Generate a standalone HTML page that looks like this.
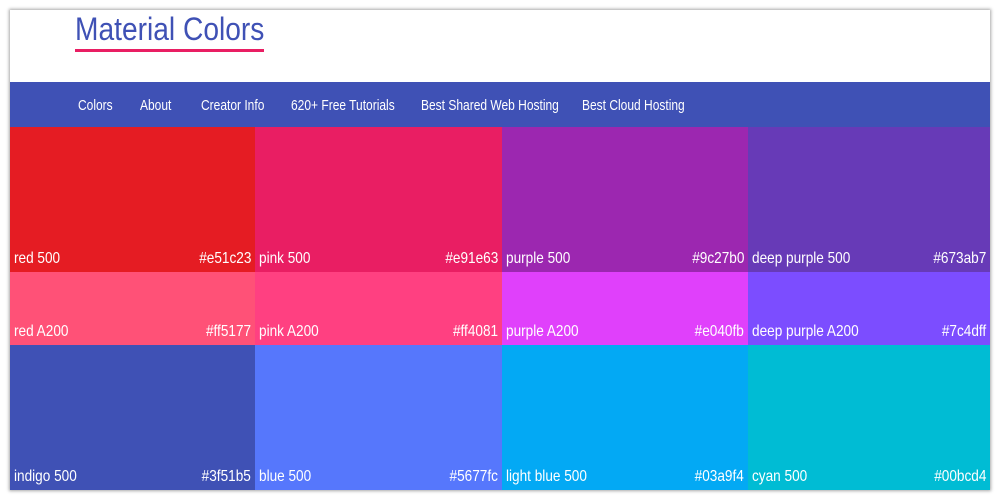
<!DOCTYPE html>
<html><head><style>
body{margin:0;width:1000px;height:500px;background:#fff;overflow:hidden;font-family:"Liberation Sans",sans-serif;}
.frame{position:absolute;left:10px;top:10px;width:980px;height:480px;box-shadow:0 0 3px 1px rgba(0,0,0,.35);overflow:hidden;background:#fff}
.title{position:absolute;left:65px;top:1px;font-size:32px;color:#3f51b5;font-weight:300;transform:scaleX(0.88);transform-origin:0 0;white-space:nowrap}
.ul{position:absolute;left:65px;top:39px;width:189px;height:3px;background:#e91e63}
.nav{position:absolute;left:0;top:72px;width:980px;height:45px;background:#3f51b5}
.nav span{position:absolute;top:15px;color:#fff;font-size:15px;transform:scaleX(0.8);transform-origin:0 0;white-space:nowrap}
.c{position:absolute;color:#fff;font-size:16px}
.c .n{position:absolute;left:4px;bottom:4px;transform:scaleX(0.85);transform-origin:0 0;white-space:nowrap}
.c .h{position:absolute;right:4px;bottom:4px;transform:scaleX(0.85);transform-origin:100% 0;white-space:nowrap}
</style></head><body>
<div class="frame">
<div class="title">Material Colors</div>
<div class="ul"></div>
<div class="nav">
<span style="left:68px">Colors</span>
<span style="left:130px">About</span>
<span style="left:191px">Creator Info</span>
<span style="left:281px">620+ Free Tutorials</span>
<span style="left:411px">Best Shared Web Hosting</span>
<span style="left:572px">Best Cloud Hosting</span>
</div>
<div class="c" style="left:0;top:117px;width:245px;height:145px;background:#e51c23"><span class="n">red 500</span><span class="h">#e51c23</span></div>
<div class="c" style="left:245px;top:117px;width:247px;height:145px;background:#e91e63"><span class="n">pink 500</span><span class="h">#e91e63</span></div>
<div class="c" style="left:492px;top:117px;width:246px;height:145px;background:#9c27b0"><span class="n">purple 500</span><span class="h">#9c27b0</span></div>
<div class="c" style="left:738px;top:117px;width:242px;height:145px;background:#673ab7"><span class="n">deep purple 500</span><span class="h">#673ab7</span></div>
<div class="c" style="left:0;top:262px;width:245px;height:73px;background:#ff5177"><span class="n">red A200</span><span class="h">#ff5177</span></div>
<div class="c" style="left:245px;top:262px;width:247px;height:73px;background:#ff4081"><span class="n">pink A200</span><span class="h">#ff4081</span></div>
<div class="c" style="left:492px;top:262px;width:246px;height:73px;background:#e040fb"><span class="n">purple A200</span><span class="h">#e040fb</span></div>
<div class="c" style="left:738px;top:262px;width:242px;height:73px;background:#7c4dff"><span class="n">deep purple A200</span><span class="h">#7c4dff</span></div>
<div class="c" style="left:0;top:335px;width:245px;height:145px;background:#3f51b5"><span class="n">indigo 500</span><span class="h">#3f51b5</span></div>
<div class="c" style="left:245px;top:335px;width:247px;height:145px;background:#5677fc"><span class="n">blue 500</span><span class="h">#5677fc</span></div>
<div class="c" style="left:492px;top:335px;width:246px;height:145px;background:#03a9f4"><span class="n">light blue 500</span><span class="h">#03a9f4</span></div>
<div class="c" style="left:738px;top:335px;width:242px;height:145px;background:#00bcd4"><span class="n">cyan 500</span><span class="h">#00bcd4</span></div>
</div>
</body></html>
